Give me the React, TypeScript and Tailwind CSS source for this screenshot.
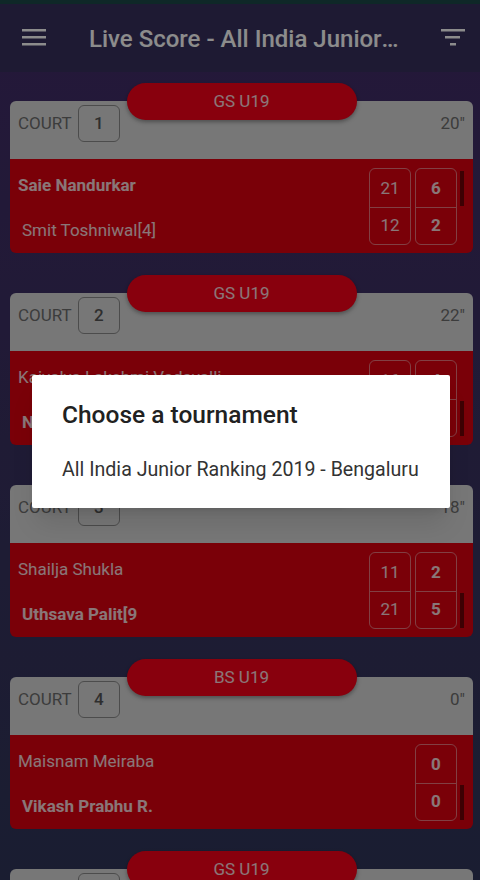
import React from "react";

type Match = {
  event: string;
  court: number;
  time: string;
  p1: string;
  p2: string;
  // which player line is bold / serving (0 or 1)
  lead: 0 | 1;
  games: [string, string][];
};

const matches: Match[] = [
  { event: "GS U19", court: 1, time: '20"', p1: "Saie Nandurkar", p2: "Smit Toshniwal[4]", lead: 0, games: [["21", "12"], ["6", "2"]] },
  { event: "GS U19", court: 2, time: '22"', p1: "Kaivalya Lakshmi Vadavalli", p2: "Neha Pandit", lead: 1, games: [["16", "21"], ["4", "7"]] },
  { event: "GS U19", court: 3, time: '18"', p1: "Shailja Shukla", p2: "Uthsava Palit[9", lead: 1, games: [["11", "21"], ["2", "5"]] },
  { event: "BS U19", court: 4, time: '0"', p1: "Maisnam Meiraba", p2: "Vikash Prabhu R.", lead: 1, games: [["0", "0"]] },
  { event: "GS U19", court: 5, time: '3"', p1: "Tasnim Mir", p2: "Aditi Bhatt", lead: 0, games: [["3", "1"]] },
];

function ScoreColumn({ pair, last }: { pair: [string, string]; last: boolean }) {
  return (
    <div className="flex h-[77px] w-[42px] flex-col rounded-md border border-white/45">
      <div className={`flex flex-1 items-center justify-center pt-[2px] ${last ? "font-bold" : ""}`}>{pair[0]}</div>
      <div className={`flex flex-1 items-center justify-center border-t border-white/45 ${last ? "font-bold" : ""}`}>
        {pair[1]}
      </div>
    </div>
  );
}

function MatchCard({ m }: { m: Match }) {
  return (
    <div className="flex flex-col items-center">
      <div className="relative z-10 -mb-[19px] flex h-[37px] w-[230px] items-center justify-center rounded-full bg-[#f70018] text-[17px] text-white/85 shadow-[0_2px_4px_rgba(0,0,0,0.35)]">
        {m.event}
      </div>
      <div className="w-full overflow-hidden rounded-md">
        <div className="flex h-[58px] items-start justify-between bg-[#d9d9d9] pl-2 pr-2 pt-1">
          <div className="flex items-center gap-[6px]">
            <span className="text-[17px] text-[#6e6e6e]">COURT</span>
            <div className="flex h-[37px] w-[42px] items-center justify-center rounded-md border-[1.5px] border-[#8a8a8a] text-[17px] font-medium text-[#555]">
              {m.court}
            </div>
          </div>
          <span className="mt-[6px] text-[17px] text-[#6e6e6e]">{m.time}</span>
        </div>
        <div className="flex bg-[#de000f] pb-2 pl-2 pr-[9px] pt-[9px] text-[17px] text-white/85">
          <div className="flex min-w-0 flex-1 flex-col gap-[23px] pt-[6px] leading-[22px]">
            <span className={`truncate ${m.lead === 0 ? "font-bold" : ""}`}>{m.p1}</span>
            <span className={`truncate pl-1 ${m.lead === 1 ? "font-bold" : ""}`}>{m.p2}</span>
          </div>
          <div className="flex gap-1">
            {m.games.map((g, i) => (
              <ScoreColumn key={i} pair={g} last={i === m.games.length - 1} />
            ))}
          </div>
          <div className="ml-[3px] flex w-[4px] flex-col">
            <div className={`mt-[3px] h-[35px] ${m.lead === 0 ? "bg-black/50" : ""}`} />
            <div className={`mt-[3px] h-[35px] ${m.lead === 1 ? "bg-black/50" : ""}`} />
          </div>
        </div>
      </div>
    </div>
  );
}

export default function App() {
  return (
    <div className="relative h-[880px] w-[480px] overflow-hidden bg-gradient-to-b from-[#432c6a] via-[#3a3262] to-[#30365a] font-['Roboto','Liberation_Sans',sans-serif]">
      <div className="h-[4px] bg-[#1c4a4a]" />
      {/* toolbar */}
      <div className="flex h-[68px] items-center bg-[#37305e] pl-[22px] pr-[15px]">
        <svg width="24" height="18" viewBox="0 0 24 18" className="-mt-[3px] text-white">
          <rect x="0" y="1" width="24" height="2.5" fill="currentColor" />
          <rect x="0" y="8" width="24" height="2.5" fill="currentColor" />
          <rect x="0" y="15" width="24" height="2.5" fill="currentColor" />
        </svg>
        <div className="ml-[43px] mt-[2px] w-[310px] truncate text-[24px] font-medium text-white">
          Live Score - All India Junior Ranking 2019 - Bengaluru
        </div>
        <svg width="24" height="18" viewBox="0 0 24 18" className="-mt-[3px] ml-auto text-white">
          <rect x="0" y="1" width="24" height="2.5" fill="currentColor" />
          <rect x="4" y="8" width="15" height="2.5" fill="currentColor" />
          <rect x="9" y="15" width="6" height="2.5" fill="currentColor" />
        </svg>
      </div>
      {/* match list */}
      <div className="ml-[10px] mr-[7px] mt-[11px] flex flex-col gap-[22px]">
        {matches.map((m) => (
          <MatchCard key={m.court} m={m} />
        ))}
      </div>

      {/* modal backdrop */}
      <div className="absolute inset-0 z-20 bg-black/45" />
      <div className="absolute left-[32px] top-[375px] z-30 w-[418px] rounded-[2px] bg-white pb-[25px] pl-[30px] pt-[25px] shadow-xl">
        <div className="text-[24.5px] font-medium leading-[30px] text-[#212121]">Choose a tournament</div>
        <div className="mt-[27px] text-[19.6px] leading-[26px] text-[#333]">
          All India Junior Ranking 2019 - Bengaluru
        </div>
      </div>
    </div>
  );
}
